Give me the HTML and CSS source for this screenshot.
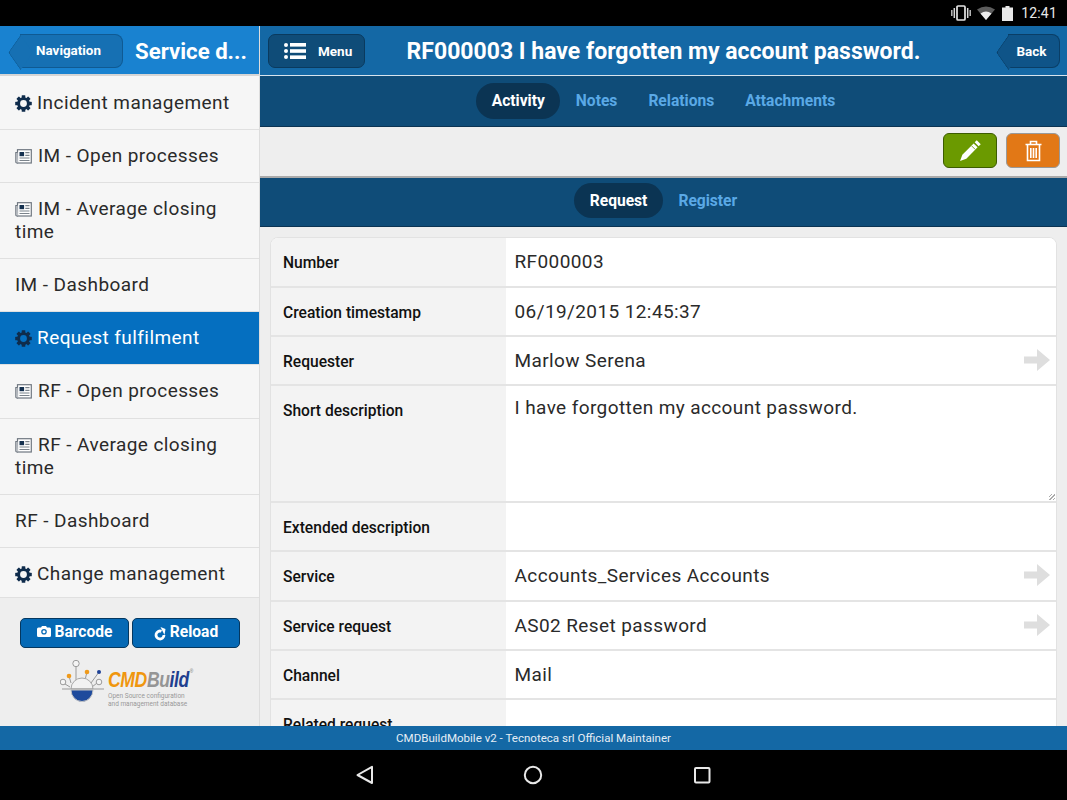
FILE: index.html
```html
<!DOCTYPE html>
<html lang="en">
<head>
<meta charset="utf-8">
<title>CMDBuild Mobile</title>
<link rel="stylesheet" href="styles.css">
</head>
<body>
<svg class="defs" width="0" height="0" aria-hidden="true">
  <symbol id="gear" viewBox="0 0 16 16">
    <circle cx="8" cy="8" r="4.6" fill="none" stroke="currentColor" stroke-width="2.8"/>
    <g fill="currentColor">
      <rect x="6.3" y="0.2" width="3.4" height="3.2" rx=".5"/>
      <rect x="6.3" y="12.6" width="3.4" height="3.2" rx=".5"/>
      <rect x="0.2" y="6.3" width="3.2" height="3.4" rx=".5"/>
      <rect x="12.6" y="6.3" width="3.2" height="3.4" rx=".5"/>
      <rect x="6.3" y="0.2" width="3.4" height="3.2" rx=".5" transform="rotate(45 8 8)"/>
      <rect x="6.3" y="12.6" width="3.4" height="3.2" rx=".5" transform="rotate(45 8 8)"/>
      <rect x="0.2" y="6.3" width="3.2" height="3.4" rx=".5" transform="rotate(45 8 8)"/>
      <rect x="12.6" y="6.3" width="3.2" height="3.4" rx=".5" transform="rotate(45 8 8)"/>
    </g>
  </symbol>
  <symbol id="news" viewBox="0 0 17 15">
    <rect x="2.5" y="0.7" width="13.8" height="13.3" fill="#fff" stroke="#6f7780" stroke-width="1.2"/>
    <path d="M2.5 3.5H0.8V13a1 1 0 0 0 1 1h1" fill="#d5d8db" stroke="#6f7780" stroke-width="1.1"/>
    <rect x="4.5" y="3" width="4.6" height="4.2" fill="#14304f"/>
    <path d="M10.3 3.6h4.2M10.3 6.3h4.2M4.5 9h10M4.5 11.5h10" stroke="#7b838b" stroke-width="1.2"/>
  </symbol>
  <symbol id="go" viewBox="0 0 26 22">
    <path d="M0 7.5h13V0l13 11-13 11v-7.500H0z" fill="#dedede"/>
  </symbol>
</svg>

<div class="status">
  <svg class="st-vib" width="20" height="16" viewBox="0 0 20 16"><path d="M.8 5v6M19.200 5v6" stroke="#bdbdbd" stroke-width="1.500" fill="none"/><path d="M3.300 3v10M16.700 3v10" stroke="#d8d8d8" stroke-width="1.500" fill="none"/><rect x="6" y="1" width="8" height="14" rx="1" fill="none" stroke="#e4e4e4" stroke-width="1.700"/></svg>
  <svg class="st-wifi" width="18" height="14" viewBox="0 0 18 14"><path d="M0 3.500Q9-2.500 18 3.500L9 14z" fill="#5c5c5c"/><path d="M3.500 7.400Q9 3.800 14.500 7.400L9 14z" fill="#eee"/></svg>
  <svg class="st-bat" width="11" height="15" viewBox="0 0 11 15"><path d="M3.500 0h4v1.500H11V15H0V1.500h3.500z" fill="#e8e8e8"/></svg>
  <span class="clock">12:41</span>
</div>

<div class="app">
  <aside class="side">
    <header class="side-head">
      <a class="btn-nav">Navigation</a>
      <h2 class="side-title">Service d...</h2>
    </header>
    <nav class="side-list">
      <a class="row row-1"><svg class="ic-gear"><use href="#gear"/></svg>Incident management</a>
      <a class="row row-2"><svg class="ic-news"><use href="#news"/></svg>IM - Open processes</a>
      <a class="row row-3"><svg class="ic-news"><use href="#news"/></svg>IM - Average closing time</a>
      <a class="row row-2">IM - Dashboard</a>
      <a class="row row-2 on"><svg class="ic-gear"><use href="#gear"/></svg>Request fulfilment</a>
      <a class="row row-4"><svg class="ic-news"><use href="#news"/></svg>RF - Open processes</a>
      <a class="row row-3"><svg class="ic-news"><use href="#news"/></svg>RF - Average closing time</a>
      <a class="row row-2">RF - Dashboard</a>
      <a class="row row-5"><svg class="ic-gear"><use href="#gear"/></svg>Change management</a>
    </nav>
    <div class="side-foot">
      <div class="foot-btns">
        <a class="btn-blue btn-bar">
          <svg width="14" height="11" viewBox="0 0 14 11"><path fill="#fff" fill-rule="evenodd" d="M1.500 1.500H4L5 0h4l1 1.500h2.500A1.500 1.500 0 0 1 14 3v6.500a1.500 1.500 0 0 1-1.500 1.500h-11A1.500 1.500 0 0 1 0 9.500V3a1.500 1.500 0 0 1 1.500-1.500zM7 3a2.800 2.800 0 1 0 0 5.600A2.800 2.800 0 0 0 7 3z"/><circle cx="7" cy="5.800" r="1.500" fill="#fff"/></svg>
          Barcode</a>
        <a class="btn-blue btn-rel">
          <svg class="rel-ic" width="12" height="14" viewBox="0 0 12 14"><path fill="none" stroke="#fff" stroke-width="2.800" d="M10 8a4 4 0 1 1-2.500-3.700"/><path fill="#fff" d="M6.500 0l5 2-1 6z"/></svg>
          Reload</a>
      </div>
      <div class="logo">
        <svg class="logo-mark" width="46" height="44" viewBox="0 0 46 44">
          <g fill="none" stroke="#9a9a9a" stroke-width="1">
            <path d="M16 7V20M9 16l2 7M27 12l-2 8M39 12l-8 11M5 24l5 3M37 23l-5 4"/>
            <circle cx="16" cy="3.500" r="3.200" fill="#f4f4f4"/>
            <circle cx="3" cy="22" r="2.800" fill="#f4f4f4"/>
            <circle cx="39" cy="22" r="2.800" fill="#f4f4f4"/>
          </g>
          <circle cx="9" cy="16" r="2.300" fill="#ef9a1b"/>
          <circle cx="27" cy="12" r="2.300" fill="#ef9a1b"/>
          <circle cx="39" cy="12" r="2" fill="#1e4296"/>
          <path d="M11 29a11 11 0 0 1 22 0z" fill="#f2f2f2" stroke="#a8a8a8"/>
          <path d="M2 29h42" stroke="#999" stroke-width="1"/>
          <path d="M11 30h22a11 11.500 0 0 1-22 0z" fill="#1e4a9c" stroke="#c4c4c4"/>
        </svg>
        <div class="logo-text">
          <div class="logo-name"><span class="l-cmd">CMD</span><span class="l-bu">Bu</span><span class="l-ild">ild</span><sup class="l-r">®</sup></div>
          <div class="logo-sub">Open Source configuration<br>and management database</div>
        </div>
      </div>
    </div>
  </aside>

  <main class="main">
    <header class="main-head">
      <a class="btn-menu">
        <svg width="22" height="18" viewBox="0 0 22 18"><g fill="#fff"><circle cx="2" cy="3" r="2"/><circle cx="2" cy="9" r="2"/><circle cx="2" cy="15" r="2"/><rect x="6" y="1" width="16" height="3.600"/><rect x="6" y="7.200" width="16" height="3.600"/><rect x="6" y="13.400" width="16" height="3.600"/></g></svg>
        <span>Menu</span>
      </a>
      <h1 class="main-title">RF000003 I have forgotten my account password.</h1>
      <a class="btn-back">Back</a>
    </header>
    <div class="tabs tabs-top">
      <a class="tab active">Activity</a><a class="tab">Notes</a><a class="tab">Relations</a><a class="tab">Attachments</a>
    </div>
    <div class="actions">
      <a class="act act-edit">
        <svg width="23" height="23" viewBox="0 0 22 22"><path fill="#fff" d="M17 1.200l3.800 3.800-2 2L15 3.200zM14 4.200L17.800 8 7 18.800 1 21l2.200-6z"/><path d="M12 6.500l3.500 3.500" stroke="#6b9a00" stroke-width=".8"/></svg>
      </a>
      <a class="act act-del">
        <svg width="17" height="22" viewBox="0 0 16 22"><g fill="none" stroke="#fff" stroke-width="1.600"><path d="M0 4.500h16M5 4V1.500h6V4"/><path d="M2 5v15.500h12V5"/><path d="M5.300 8v10M8 8v10M10.700 8v10"/></g></svg>
      </a>
    </div>
    <div class="tabs tabs-sub">
      <a class="tab active tab-s">Request</a><a class="tab tab-s">Register</a>
    </div>
    <div class="scroll">
      <div class="card">
        <div class="f f-a"><div class="k">Number</div><div class="v">RF000003</div></div>
        <div class="f"><div class="k">Creation timestamp</div><div class="v">06/19/2015 12:45:37</div></div>
        <div class="f"><div class="k">Requester</div><div class="v">Marlow Serena<svg class="go"><use href="#go"/></svg></div></div>
        <div class="f f-big"><div class="k">Short description</div><div class="v v-top">I have forgotten my account password.<span class="grip"></span></div></div>
        <div class="f"><div class="k">Extended description</div><div class="v"></div></div>
        <div class="f f-a"><div class="k">Service</div><div class="v">Accounts_Services Accounts<svg class="go"><use href="#go"/></svg></div></div>
        <div class="f"><div class="k">Service request</div><div class="v">AS02 Reset password<svg class="go"><use href="#go"/></svg></div></div>
        <div class="f"><div class="k">Channel</div><div class="v">Mail</div></div>
        <div class="f"><div class="k">Related request</div><div class="v"></div></div>
      </div>
    </div>
  </main>
</div>

<footer class="foot">CMDBuildMobile v2 - Tecnoteca srl Official Maintainer</footer>

<div class="sysnav">
  <svg width="20" height="20" viewBox="0 0 20 20"><path d="M17 1.800V18L2.500 10z" fill="none" stroke="#e8e8e8" stroke-width="2" stroke-linejoin="round"/></svg>
  <svg width="20" height="20" viewBox="0 0 20 20"><circle cx="10" cy="10" r="8.200" fill="none" stroke="#e8e8e8" stroke-width="2"/></svg>
  <svg width="18" height="18" viewBox="0 0 18 18"><rect x="2" y="2" width="14.500" height="14.500" rx="1" fill="none" stroke="#e8e8e8" stroke-width="2"/></svg>
</div>
</body>
</html>
```
FILE: styles.css
```css
* { box-sizing: border-box; }
html, body { margin: 0; padding: 0; height: 800px; overflow: hidden; }
body { width: 1067px; font-family: Roboto, "Liberation Sans", sans-serif; background: #000; display: flex; flex-direction: column; color: #111; }
.defs { position: absolute; }

.status { height: 26px; background: #000; display: flex; align-items: center; justify-content: flex-end; padding-right: 10px; color: #e8e8e8; }
.st-vib { margin-right: 6px; }
.st-wifi { margin-right: 7px; }
.st-bat { margin-right: 8px; }
.clock { font-size: 14px; letter-spacing: .2px; }

.app { height: 700px; display: flex; overflow: hidden; background: #eee; }

.side { width: 260px; flex: none; display: flex; flex-direction: column; border-right: 1px solid #ddd; }
.side-head { height: 50px; flex: none; background: #1982d0; border-bottom: 2px solid #d5d5d5; display: flex; align-items: center; padding: 2px 0 0 8px; }
.btn-nav { position: relative; z-index: 0; width: 103px; height: 34px; margin: 0 12px; background: #1670b3; border: 1px solid #0f5a93; border-left: 0; border-radius: 0 8px 8px 0; color: #fff; font-size: 13.400px; font-weight: 700; display: flex; align-items: center; justify-content: center; padding-right: 5px; padding-bottom: 1px; }
.btn-nav::before { content: ""; position: absolute; z-index: -1; left: -12px; top: 4.500px; width: 24px; height: 24px; background: #1670b3; border-left: 1px solid #0f5a93; border-bottom: 1px solid #0f5a93; transform: scaleX(.7) rotate(45deg); border-radius: 0 0 0 3px; }
.side-title { margin: 0; color: #fff; font-size: 22.200px; font-weight: 700; white-space: nowrap; }

.side-list { display: flex; flex-direction: column; flex: none; background: #f6f6f6; }
.row { display: block; padding: 14px 15px 0; font-size: 19px; line-height: 23px; letter-spacing: .43px; color: #2a2a2a; border-bottom: 1px solid #e0e0e0; background: #f6f6f6; }
.row-1 { height: 54px; padding-top: 15px; }
.row-2 { height: 53px; }
.row-3 { height: 76px; }
.row-4 { height: 54px; }
.row-5 { height: 50px; }
.row.on { background: #056fc0; color: #fff; }
.ic-gear { width: 17px; height: 17px; margin-right: 5px; vertical-align: -3px; color: #0f2c4c; }
.ic-news { width: 17px; height: 15px; margin-right: 6px; vertical-align: -2px; }

.side-foot { flex: 1; background: #eee; padding-top: 20px; }
.foot-btns { display: flex; padding-left: 20px; gap: 3px; }
.btn-blue { height: 30px; background: #0569b5; border: 1px solid #04375f; border-radius: 5px; color: #fff; font-size: 15.600px; font-weight: 700; display: flex; align-items: center; justify-content: center; gap: 4px; padding-bottom: 3px; }
.btn-bar { width: 109px; }
.btn-rel { width: 108px; }
.rel-ic { margin-top: 4px; }
.logo { display: flex; margin-top: 12px; padding-left: 60px; }
.logo-mark { margin-right: 2px; flex: none; }
.logo-text { margin-top: 9px; }
.logo-name { font-size: 22px; line-height: 22px; font-style: italic; font-weight: 700; font-family: "Liberation Sans", sans-serif; letter-spacing: -.5px; white-space: nowrap; position: relative; transform: scaleX(.8); transform-origin: left center; }
.l-cmd { color: #f0960e; }
.l-bu { color: #959595; }
.l-ild { color: #1f3f8f; }
.l-r { position: absolute; font-size: 6px; top: -2px; font-style: normal; font-weight: 400; color: #777; margin-left: 1px; line-height: 8px; }
.logo-sub { font-size: 6.500px; line-height: 8px; color: #999; white-space: nowrap; margin-top: 1px; }

.main { flex: 1; min-width: 0; display: flex; flex-direction: column; overflow: hidden; }
.main-head { height: 50px; flex: none; background: #1468a5; border-bottom: 1px solid #d7e4ee; display: flex; align-items: center; justify-content: center; position: relative; padding-top: 2px; }
.main-title { margin: 0; color: #fff; font-size: 23px; font-weight: 700; white-space: nowrap; }
.btn-menu { position: absolute; left: 8px; top: 8px; width: 97px; height: 34px; background: #0f4c78; border: 1px solid #0a3a5e; border-radius: 7px; display: flex; align-items: center; color: #fff; font-size: 13.500px; font-weight: 700; padding-left: 15px; gap: 12px; }
.btn-back { position: absolute; z-index: 0; right: 7px; top: 8px; width: 52px; height: 34px; background: #0f5488; border: 1px solid #0a3e66; border-left: 0; border-radius: 0 8px 8px 0; color: #fff; font-size: 13.500px; font-weight: 700; display: flex; align-items: center; justify-content: center; padding-right: 4px; }
.btn-back::before { content: ""; position: absolute; z-index: -1; left: -12px; top: 4.500px; width: 24px; height: 24px; background: #0f5488; border-left: 1px solid #0a3e66; border-bottom: 1px solid #0a3e66; transform: scaleX(.7) rotate(45deg); border-radius: 0 0 0 3px; }

.tabs { flex: none; background: #0f4c78; display: flex; justify-content: center; align-items: center; border-bottom: 1px solid #0b3453; }
.tabs-top { height: 51px; padding-bottom: 1px; }
.tabs-sub { height: 49px; padding-bottom: 3px; }
.tab { color: #5aa9e6; font-size: 15.600px; font-weight: 700; height: 36px; padding: 0 15.500px; display: flex; align-items: center; border-radius: 18px; }
.tab.active { color: #fff; background: #0b3453; }
.tab-s { height: 35px; }

.actions { height: 51px; flex: none; display: flex; justify-content: flex-end; gap: 9px; padding: 6px 7px 0 0; background: #eee; border-bottom: 2px solid #aaa; }
.act { width: 54px; height: 35px; border-radius: 6px; display: flex; align-items: center; justify-content: center; }
.act-edit { background: #6b9a00; border: 1px solid #3c5c00; }
.act-del { background: #e27816; border: 1px solid #999; }

.scroll { flex: 1; overflow: hidden; padding: 10px 10px 0; background: #eee; }
.card { border: 1px solid #e2e2e2; border-radius: 8px 8px 0 0; overflow: hidden; background: #fff; }
.f { display: flex; height: 49px; border-bottom: 2px solid #e4e4e4; }
.f-a { height: 50px; }
.f-big { height: 117px; }
.k { width: 235px; flex: none; background: #f3f3f3; padding: 17px 0 0 12px; font-size: 15.600px; line-height: 17px; font-weight: 500; color: #111; }
.v { flex: 1; position: relative; background: #fff; padding: 12px 8.500px 0; font-size: 19px; line-height: 23px; letter-spacing: .4px; color: #2a2a2a; }
.v-top { padding-top: 10px; }
.go { position: absolute; right: 6px; top: 12px; width: 26px; height: 22px; }
.grip { position: absolute; right: 1px; bottom: 1px; width: 6px; height: 6px; background: repeating-linear-gradient(135deg, transparent 0 1.500px, #aaa 1.500px 2.500px); }

.foot { height: 24px; flex: none; background: #1468a5; color: #e6eef5; text-align: center; font-size: 11.550px; line-height: 24px; }
.sysnav { height: 50px; flex: none; background: #000; display: flex; align-items: center; padding-left: 355px; }
.sysnav svg:nth-child(1) { margin-right: 148px; }
.sysnav svg:nth-child(2) { margin-right: 150px; }
```
